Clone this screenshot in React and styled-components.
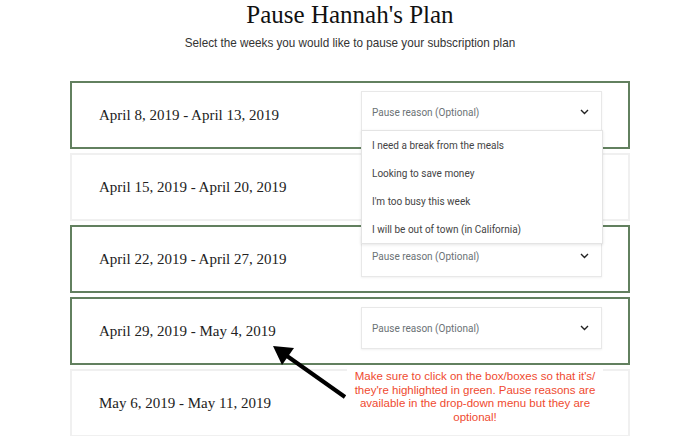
import React from "react";
import styled, { createGlobalStyle } from "styled-components";

const GlobalStyle = createGlobalStyle`
  html, body { margin: 0; padding: 0; background: #ffffff; }
  * { box-sizing: border-box; }
`;

const Page = styled.div`
  position: relative;
  width: 700px;
  height: 436px;
  overflow: hidden;
  padding-top: 1px;
`;

const Title = styled.h1`
  margin: 0;
  text-align: center;
  font-family: "Liberation Serif", serif;
  font-weight: normal;
  font-size: 25px;
  line-height: 28px;
  color: #111;
`;

const Subtitle = styled.p`
  margin: 6px 0 0;
  text-align: center;
  font-family: "Liberation Sans", sans-serif;
  font-size: 13px;
  line-height: 16px;
  color: #333;
  transform: scaleX(0.9);
`;

const WeekList = styled.div`
  width: 560px;
  margin: 30px auto 0;
  display: flex;
  flex-direction: column;
  gap: 4px;
`;

const WeekCard = styled.div`
  position: relative;
  z-index: ${(p) => (p.$open ? 4 : 1)};
  height: 68px;
  border: 2px solid ${(p) => (p.$selected ? "#62805f" : "#f0f0f0")};
  display: flex;
  align-items: center;
  justify-content: space-between;
  padding: 0 26px 0 27px;
  background: #fff;
`;

const DateLabel = styled.span`
  font-family: "Liberation Serif", serif;
  font-size: 15px;
  color: #222;
`;

const Select = styled.div`
  position: relative;
  align-self: flex-start;
  margin-top: 8px;
  width: 241px;
  height: 42px;
  border: 1px solid #e8e8e8;
  box-shadow: 0 1px 2px rgba(0, 0, 0, 0.06);
  display: flex;
  align-items: center;
  justify-content: space-between;
  padding: 0 12px 0 10px;
  background: #fff;
  color: #6b7275;
`;

const CondensedText = styled.span`
  display: inline-block;
  white-space: nowrap;
  font-family: "Roboto", sans-serif;
  font-size: 11.5px;
  transform: scaleX(0.87);
  transform-origin: left center;
`;

const Menu = styled.div`
  position: absolute;
  top: calc(100% - 2px);
  left: -1px;
  width: 242px;
  background: #fff;
  border: 1px solid #e4e4e4;
  box-shadow: 0 1px 3px rgba(0, 0, 0, 0.1);
  z-index: 5;
`;

const MenuItem = styled.div`
  height: 28px;
  display: flex;
  align-items: center;
  padding-left: 10px;
  color: #444;
`;

const Annotation = styled.div`
  position: absolute;
  left: 347px;
  top: 368px;
  width: 256px;
  padding: 2px 0 4px;
  background: #fff;
  text-align: center;
  font-family: "Liberation Sans", sans-serif;
  font-size: 11.5px;
  line-height: 13.7px;
  color: #ef4a2f;
  z-index: 6;
`;

const ArrowSvg = styled.svg`
  position: absolute;
  left: 0;
  top: 0;
  z-index: 7;
  pointer-events: none;
`;

const Chevron = () => (
  <svg width="9" height="6" viewBox="0 0 9 6">
    <path d="M1 1 L4.5 4.5 L8 1" fill="none" stroke="#222" strokeWidth="1.4" />
  </svg>
);

const reasons = [
  "I need a break from the meals",
  "Looking to save money",
  "I'm too busy this week",
  "I will be out of town (in California)",
];

const weeks = [
  { label: "April 8, 2019 - April 13, 2019", selected: true, open: true },
  { label: "April 15, 2019 - April 20, 2019", selected: false },
  { label: "April 22, 2019 - April 27, 2019", selected: true },
  { label: "April 29, 2019 - May 4, 2019", selected: true },
  { label: "May 6, 2019 - May 11, 2019", selected: false },
];

export default function App() {
  return (
    <Page>
      <GlobalStyle />
      <Title>Pause Hannah's Plan</Title>
      <Subtitle>Select the weeks you would like to pause your subscription plan</Subtitle>
      <WeekList>
        {weeks.map((w, i) => (
          <WeekCard key={i} $selected={w.selected} $open={w.open}>
            <DateLabel>{w.label}</DateLabel>
            {w.selected && (
              <Select>
                <CondensedText>Pause reason (Optional)</CondensedText>
                <Chevron />
                {w.open && (
                  <Menu>
                    {reasons.map((r) => (
                      <MenuItem key={r}>
                        <CondensedText>{r}</CondensedText>
                      </MenuItem>
                    ))}
                  </Menu>
                )}
              </Select>
            )}
          </WeekCard>
        ))}
      </WeekList>
      <Annotation>
        Make sure to click on the box/boxes so that it's/ they're highlighted in green. Pause reasons are
        available in the drop-down menu but they are optional!
      </Annotation>
      <ArrowSvg width="700" height="436" viewBox="0 0 700 436">
        <line x1="287" y1="356" x2="345" y2="397" stroke="#000" strokeWidth="4" />
        <polygon points="273,346 294,348 282,365" fill="#000" />
      </ArrowSvg>
    </Page>
  );
}
